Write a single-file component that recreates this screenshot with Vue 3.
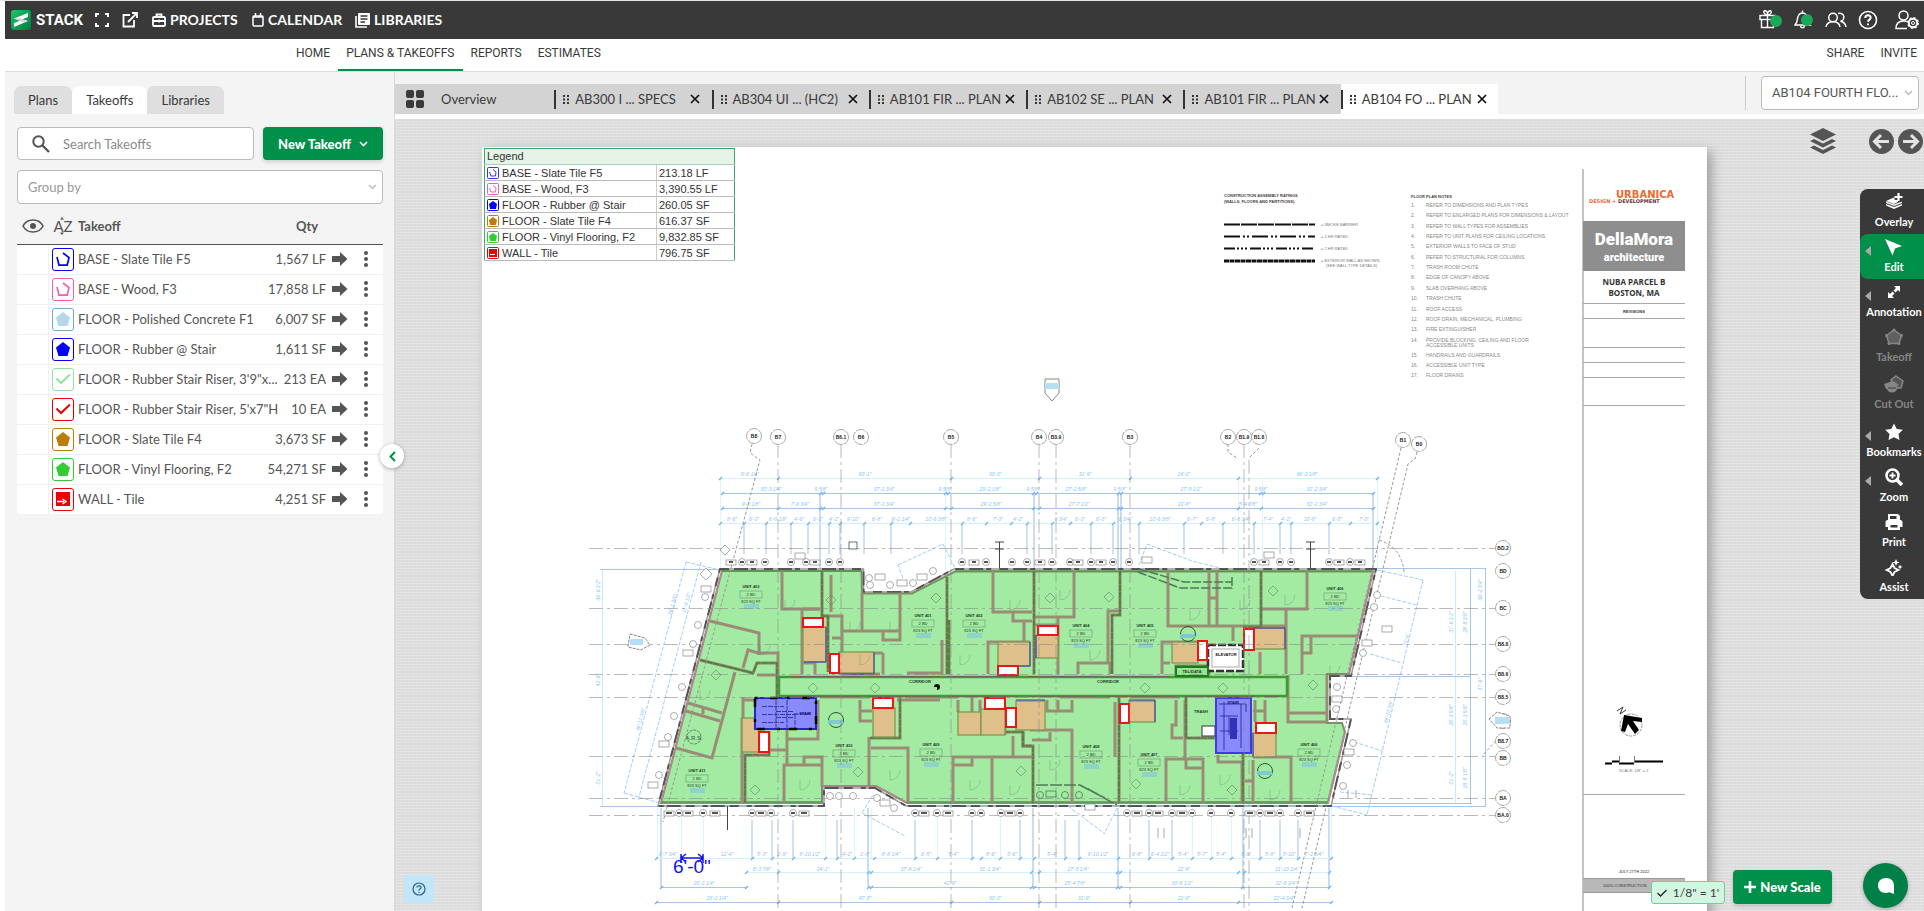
<script setup>
import { ref } from 'vue'

const search = ref('')
const takeoffs = [
  { name: 'BASE - Slate Tile F5', qty: '1,567 LF', kind: 'line', color: '#0000fa' },
  { name: 'BASE - Wood, F3', qty: '17,858 LF', kind: 'line', color: '#ee5fb0' },
  { name: 'FLOOR - Polished Concrete F1', qty: '6,007 SF', kind: 'area', color: '#b4d7ee', edge: '#66aedd' },
  { name: 'FLOOR - Rubber @ Stair', qty: '1,611 SF', kind: 'area', color: '#0000fa' },
  { name: 'FLOOR - Rubber Stair Riser, 3\'9"x...', qty: '213 EA', kind: 'check', color: '#8fe6a0' },
  { name: 'FLOOR - Rubber Stair Riser, 5\'x7"H', qty: '10 EA', kind: 'check', color: '#ea0000' },
  { name: 'FLOOR - Slate Tile F4', qty: '3,673 SF', kind: 'area', color: '#bd7d0c' },
  { name: 'FLOOR - Vinyl Flooring, F2', qty: '54,271 SF', kind: 'area', color: '#33cc33' },
  { name: 'WALL - Tile', qty: '4,251 SF', kind: 'wall', color: '#ea0000' },
]
const legend = [
  { name: 'BASE - Slate Tile F5', qty: '213.18 LF', kind: 'line', color: '#3030ff' },
  { name: 'BASE - Wood, F3', qty: '3,390.55 LF', kind: 'line', color: '#ee5fb0' },
  { name: 'FLOOR - Rubber @ Stair', qty: '260.05 SF', kind: 'area', color: '#0000fa' },
  { name: 'FLOOR - Slate Tile F4', qty: '616.37 SF', kind: 'area', color: '#bd7d0c' },
  { name: 'FLOOR - Vinyl Flooring, F2', qty: '9,832.85 SF', kind: 'area', color: '#33cc33' },
  { name: 'WALL - Tile', qty: '796.75 SF', kind: 'wall', color: '#ea0000' },
]
const sheets = ['AB300 I ... SPECS', 'AB304 UI ... (HC2)', 'AB101 FIR ... PLAN', 'AB102 SE ... PLAN', 'AB101 FIR ... PLAN', 'AB104 FO ... PLAN']
const tools = [
  { name: 'Overlay', icon: 'overlay' },
  { name: 'Edit', icon: 'edit', menu: true, active: true },
  { name: 'Annotation', icon: 'annotation', menu: true },
  { name: 'Takeoff', icon: 'takeoff', off: true },
  { name: 'Cut Out', icon: 'cutout', off: true },
  { name: 'Bookmarks', icon: 'star', menu: true },
  { name: 'Zoom', icon: 'zoom', menu: true },
  { name: 'Print', icon: 'print' },
  { name: 'Assist', icon: 'assist' },
]

/* Plan sheet geometry, in sheet units */
const outline = 'M722 571H861.5L862 593.5H912L955 571.5H1373L1349 674H1327V723H1342L1345 732L1328 803H907L876 786H822V803H661Z'
const shell = 'M720 569H863.5V592H911L954 569H1376L1351 676H1330V719H1351L1331 806H906L875 788H824V806H658Z'
const walls = [
  'M782 571V609H820', 'M862 593V631M842 631H900', 'M900 593V640H883V631', 'M823 616H842V674M832 638H842',
  'M993 571V612H1032', 'M1013 612V621H1032M1024 621V641', 'M988 674V642H1030', 'M710 621L759 633V655', 'M802 610V674', 'M802 609H820',
  'M1074 571V617H1035M1035 625H1058M1058 617V674', 'M1108 662V611H1120', 'M1168 571V626H1286', 'M1209 571V626M1217 571V626M1209 598H1217',
  'M1307 571V609H1262', 'M1286 609V674', 'M1357 636H1302V674M1311 636V653H1302', 'M1233 626V641', 'M1162 674V642H1208M1162 663H1170',
  'M688 703L722 713M686 711L720 721M703 708V714', 'M735 672L712 758L676 748', 'M743 668L748 650L758 653H778V675H757',
  'M743 697V718', 'M742 718V803', 'M769 750H787M787 730V765M788 739H818V700', 'M822 765V786M822 765H784V803M804 765V757H822V765',
  'M860 700V721H872M860 711H872', 'M869 786V737M871 748H908V803', 'M953 803V757H1032M953 765H972V757M992 757V803',
  'M958 700V712M1013 736V757M1023 732V746H1032M980 700V712', 'M803 663H815V674', 'M883 653V674M875 653H883M942 640V673H907',
  'M1078 674V663H1110V674', 'M1030 730H1072V803M1032 740H1050V732', 'M1047 700V711H1072V700M1058 700V711',
  'M1115 702V757', 'M1176 700V725H1172V738H1183', 'M1185 700V759', 'M1166 803V759H1203V803M1186 759V768H1203',
  'M1218 755V762H1242V803', 'M1253 760V803M1245 781H1253M1253 757H1291V803', 'M1253 711H1265M1265 700V722M1255 700V722',
  'M1288 675V722H1327M1288 713H1327M1327 675V722', 'M1260 652V674', 'M831 575V612', 'M842 674H880M820 697H870M905 697H958M1060 697H1110M1130 697H1180',
  'M972 697V712M1005 712V735', 'M897 700H940', 'M742 700H755',
]
const partyWalls = [
  'M822 571V616H828V672', 'M947 577V674M949 620V674', 'M1034 571V674', 'M1120 571V615H1112V674', 'M1261 571V627H1243',
  'M700 660L753 673L757 663H777V697', 'M745 803V755H769V731', 'M870 738H900V697', 'M1005 732H1023V746H1033V803', 'M1119 697V803',
  'M1186 697V738H1215', 'M1243 753V803', 'M1176 666V674H1209V666Z',
]
const baths = [
  [803, 627, 23, 35], [839, 652, 35, 21], [998, 642, 32, 24], [1036, 635, 22, 23], [1172, 642, 26, 21], [1253, 628, 32, 21],
  [742, 718, 18, 34], [873, 708, 22, 29], [958, 712, 23, 23], [981, 709, 24, 26], [1016, 701, 29, 29], [1129, 701, 26, 21], [1253, 733, 23, 24],
]
const tubs = [
  [803, 618, 20, 9], [830, 654, 9, 19], [998, 666, 20, 9], [1038, 626, 20, 9], [1198, 641, 9, 19], [1244, 629, 10, 21],
  [759, 732, 10, 20], [873, 698, 20, 10], [985, 698, 20, 11], [1006, 708, 10, 19], [1120, 704, 9, 19], [1256, 723, 20, 10],
]
const units = [
  ['UNIT 403', 751, 588], ['UNIT 401', 923, 617], ['UNIT 402', 974, 617], ['UNIT 404', 1081, 627], ['UNIT 405', 1145, 627], ['UNIT 406', 1335, 590],
  ['UNIT 411', 697, 772], ['UNIT 410', 844, 747], ['UNIT 409', 931, 746], ['UNIT 408', 1091, 748], ['UNIT 407', 1149, 756], ['UNIT 406', 1309, 746],
]
const topBubbles = [
  ['B8', 754, 436], ['B7', 778, 437], ['B6.1', 841, 437], ['B6', 861, 437], ['B5', 951, 437], ['B4', 1039, 437], ['B3.9', 1056, 437],
  ['B3', 1130, 437], ['B2', 1228, 437], ['B1.9', 1244, 437], ['B1.8', 1259, 437], ['B1', 1403, 440], ['B0', 1419, 444],
]
const sideBubbles = [
  ['BD.2', 548], ['BD', 571], ['BC', 608], ['B8.8', 644], ['B8.6', 674], ['B8.5', 697], ['B8.4', 721], ['B8.7', 741], ['BB', 758], ['BA', 798], ['BA.0', 815],
]
const colLines = [778, 841, 951, 1039, 1056, 1130, 1244, 1249]
const rowLines = [548, 608, 644, 674, 697, 756, 798, 815]
const dims = [
  { y: 478, from: 720, to: 1377, light: true, at: [720, 778, 951, 1039, 1130, 1238, 1377] },
  { y: 493, from: 722, to: 1373, at: [722, 820, 823, 945, 948, 1033, 1036, 1118, 1121, 1260, 1263, 1373] },
  { y: 508, from: 722, to: 1373, at: [722, 778, 820, 823, 945, 951, 1033, 1039, 1118, 1121, 1238, 1261, 1373] },
  { y: 523, from: 720, to: 1377, light: true, at: [720, 744, 766, 791, 808, 829, 840, 864, 891, 910, 962, 986, 1011, 1027, 1052, 1070, 1091, 1113, 1139, 1184, 1201, 1223, 1254, 1280, 1291, 1329, 1350, 1377] },
  { y: 858, from: 656, to: 1331, light: true, at: [656, 752, 772, 793, 825, 837, 854, 874, 915, 937, 972, 981, 1000, 1020, 1034, 1065, 1079, 1118, 1149, 1172, 1192, 1211, 1231, 1260, 1280, 1298, 1331] },
  { y: 872, from: 746, to: 1329, light: true, at: [746, 778, 868, 871, 1031, 1039, 1117, 1120, 1238, 1244, 1329] },
  { y: 887, from: 661, to: 1329, gap: true, at: [661, 746, 868, 871, 1031, 1034, 1117, 1120, 1242, 1329] },
  { y: 902, from: 656, to: 1331, at: [656, 778, 951, 1039, 1130, 1238, 1331] },
]
const dimLabels = [
  [750, 476, '9\'-8 1/4"'], [865, 476, '60\'-1"'], [995, 476, '30\'-3"'], [1085, 476, '31\'-9"'], [1184, 476, '24\'-0"'], [1307, 476, '46\'-2 1/8"'],
  [771, 491, '30\'-3 1/4"'], [821, 491, '9 5/8"'], [884, 491, '37\'-1 3/4"'], [945, 491, '9 5/8"'], [990, 491, '29\'-2 1/8"'], [1033, 491, '9 5/8"'], [1076, 491, '27\'-2 5/8"'], [1120, 491, '9 5/8"'], [1191, 491, '27\'-5 1/2"'], [1261, 491, '9 5/8"'], [1317, 491, '32\'-2 3/4"'],
  [751, 506, '9\'-2 1/8"'], [800, 506, '7\'-6 3/4"'], [884, 506, '37\'-1 3/4"'], [991, 506, '29\'-2 5/8"'], [1079, 506, '27\'-7 1/2"'], [1184, 506, '22\'-8"'], [1248, 506, '5\'-4 7/8"'], [1317, 506, '32\'-2 3/4"'],
  [732, 521, '8\'-6"'], [754, 521, '6\'-3"'], [778, 521, '6\'-8 1/8"'], [799, 521, '4\'-6"'], [818, 521, '6\'-2"'], [834, 521, '4\'-2"'], [853, 521, '9\'-10"'], [877, 521, '6\'-8"'], [901, 521, '6\'-2 1/4"'], [936, 521, '10\'-6 3/8"'], [972, 521, '8\'-6"'], [998, 521, '7\'-3"'], [1018, 521, '4\'-2"'], [1061, 521, '8 3/4"'], [1080, 521, '6\'-3"'], [1101, 521, '6\'-3"'], [1125, 521, '6 3/4"'], [1160, 521, '10\'-6 3/8"'], [1192, 521, '6\'-7"'], [1211, 521, '6\'-8"'], [1241, 521, '6\'-8 3/4"'], [1268, 521, '7\'-4"'], [1286, 521, '4\'-2"'], [1310, 521, '10\'-8"'], [1337, 521, '6\'-5"'], [1364, 521, '7\'-3"'],
  [668, 856, '6\'-7 3/4"'], [727, 856, '12\'-4"'], [762, 856, '5\'-3"'], [782, 856, '2\'-9"'], [810, 856, '8\'-10 1/2"'], [847, 856, '4\'-2"'], [865, 856, '1\'-8"'], [891, 856, '8\'-8 1/4"'], [926, 856, '6\'-5"'], [953, 856, '5\'-4"'], [991, 856, '8\'-6"'], [1012, 856, '3\'-6"'], [1052, 856, '5\'-4"'], [1098, 856, '9\'-10 1/2"'], [1137, 856, '6\'-8"'], [1160, 856, '6\'-4 1/2"'], [1183, 856, '5\'-4"'], [1202, 856, '5\'-7"'], [1221, 856, '5\'-4"'], [1246, 856, '8\'-8"'], [1270, 856, '5\'-8"'], [1289, 856, '5\'-10"'], [1314, 856, '7\'-2 3/4"'],
  [762, 871, '8\'-3 7/8"'], [823, 871, '24\'-1"'], [911, 871, '37\'-8 1/4"'], [990, 871, '31\'-1 3/4"'], [1078, 871, '27\'-5 1/4"'], [1184, 871, '22\'-8"'], [1287, 871, '21\'-10 1/4"'],
  [704, 885, '20\'-2 1/4"'], [950, 885, '42\'-9"'], [1075, 885, '25\'-4 7/8"'], [1182, 885, '30\'-6 1/2"'], [1286, 885, '32\'-8 3/4"'],
  [717, 900, '26\'-2 1/4"'], [865, 900, '47\'-5"'], [995, 900, '30\'-3"'], [1084, 900, '31\'-9"'], [1184, 900, '22\'-8"'], [1284, 900, '22\'-4 3/4"'],
]
const topDrops = [744, 766, 791, 808, 829, 840, 864, 891, 962, 1027, 1052, 1091, 1113, 1139, 1184, 1223, 1254, 1280, 1291, 1329]
const bottomDrops = [752, 772, 793, 837, 915, 972, 1020, 1065, 1079, 1149, 1172, 1260, 1280, 1298]
const topTags = [742, 765, 791, 806, 829, 840, 962, 986, 1012, 1027, 1052, 1070, 1091, 1113, 1129, 1254, 1280, 1291, 1329, 1350]
const topBoxes = [731, 752, 815, 974, 1040, 1078, 1101, 1264, 1339, 1360]
const bottomTags = [679, 703, 752, 771, 793, 915, 937, 972, 981, 1001, 1020, 1127, 1149, 1172, 1192, 1211, 1231, 1260, 1280, 1298]
const bottomBoxes = [669, 688, 715, 761, 804, 924, 948, 1010, 1137, 1158, 1182, 1250, 1270, 1309]
const notes = [
  [206, 'REFER TO DIMENSIONS AND PLAN TYPES'],
  [216, 'REFER TO ENLARGED PLANS FOR DIMENSIONS & LAYOUT'],
  [227, 'REFER TO WALL TYPES FOR ASSEMBLIES'],
  [237, 'REFER TO UNIT PLANS FOR CEILING LOCATIONS'],
  [247, 'EXTERIOR WALLS TO FACE OF STUD'],
  [258, 'REFER TO STRUCTURAL FOR COLUMNS'],
  [268, 'TRASH ROOM CHUTE'],
  [278, 'EDGE OF CANOPY ABOVE'],
  [289, 'SLAB OVERHANG ABOVE'],
  [299, 'TRASH CHUTE'],
  [310, 'ROOF ACCESS'],
  [320, 'ROOF DRAIN, MECHANICAL, PLUMBING'],
  [330, 'FIRE EXTINGUISHER'],
  [341, 'PROVIDE BLOCKING, CEILING AND FLOOR'],
  [356, 'HANDRAILS AND GUARDRAILS'],
  [366, 'ACCESSIBLE UNIT TYPE'],
  [376, 'FLOOR DRAINS'],
]
</script>

<template>
  <div class="app">
    <header class="topbar">
      <a class="brand" href="#" aria-label="STACK">
        <svg width="20" height="20" viewBox="0 0 20 20"><defs><linearGradient id="lg" x1="0" y1="0" x2="1" y2="1"><stop offset="0" stop-color="#1ec468" /><stop offset="1" stop-color="#067a42" /></linearGradient></defs><rect width="20" height="20" rx="3" fill="url(#lg)" /><path d="M3 8.500L17 3V7L8 10.500Z" fill="#fff" /><path d="M17 11L3 17V13L12 9.500Z" fill="#fff" /><path d="M3 8.500L8 8L17 11L12 12Z" fill="#c9d6ce" /></svg>
        <span>STACK</span>
      </a>
      <button class="ib expand" aria-label="Full screen"><svg width="14" height="14" viewBox="0 0 14 14" fill="none" stroke="#fff" stroke-width="2"><path d="M1 4V1H4M10 1H13V4M13 10V13H10M4 13H1V10" /></svg></button>
      <button class="ib popout" aria-label="Open in new window"><svg width="16" height="16" viewBox="0 0 16 16" fill="none" stroke="#fff" stroke-width="1.800"><path d="M8 3H1.500V14.500H12V8M6 10L14.500 1.500M10 1H15V6" /></svg></button>
      <a class="menu projects" href="#"><svg width="14" height="14" viewBox="0 0 14 14" fill="none" stroke="#fff" stroke-width="1.800"><rect x="1" y="4" width="12" height="9" rx="1" /><path d="M4.500 4V1.500H9.500V4M1 8H13" /><path d="M7 6.500V9.500" /></svg>PROJECTS</a>
      <a class="menu calendar" href="#"><svg width="12" height="14" viewBox="0 0 12 14" fill="none" stroke="#fff" stroke-width="1.500"><rect x="1" y="3" width="10" height="10" rx="1" /><path d="M1 4H11M3.500 0V4M8.500 0V4" /></svg>CALENDAR</a>
      <a class="menu libraries" href="#"><svg width="15" height="15" viewBox="0 0 15 15"><path d="M1 3V14H12" fill="none" stroke="#fff" stroke-width="1.600" /><rect x="3" y="0" width="12" height="12" rx="1" fill="#fff" /><path d="M5.500 3H12.500M5.500 6H12.500M5.500 9H10" stroke="#393939" stroke-width="1.400" /></svg>LIBRARIES</a>
      <div class="actions">
        <button class="ib" aria-label="What's new"><svg width="24" height="20" viewBox="0 0 24 20" fill="none" stroke="#fff" stroke-width="1.400"><rect x="1" y="5.500" width="15" height="4" /><path d="M2.500 9.500V17.500H14.500V9.500M8.500 5.500V17.500M8.500 5C5 5 3.500 1 6 .8C8 .8 8.500 3 8.500 5C8.500 3 9 .8 11 .8C13.500 1 12 5 8.500 5" /><circle cx="17" cy="11" r="6" fill="#1ba85a" stroke="none" /></svg></button>
        <button class="ib" aria-label="Notifications"><svg width="20" height="20" viewBox="0 0 20 20" fill="none" stroke="#fff" stroke-width="1.400"><path d="M1 15C4 12 3 9 4 6.500C5 4 6.500 3 8.500 3C10.500 3 12 4 13 6.500C14 9 13 12 16 15ZM8.500 .5V3M6.500 16C7 18.500 10 18.500 10.500 16" /><circle cx="13" cy="10" r="6" fill="#1ba85a" stroke="none" /></svg></button>
        <button class="ib" aria-label="Team"><svg width="22" height="16" viewBox="0 0 22 16" fill="none" stroke="#fff" stroke-width="1.500"><circle cx="8" cy="5.500" r="4.300" /><path d="M1 15C1.500 11.500 4 9.700 8 9.700C12 9.700 14.500 11.500 15 15M13 1.500C20 0 20.500 8 15.500 9.300C19 10 20.500 12 21 15" /></svg></button>
        <button class="ib" aria-label="Help"><svg width="20" height="20" viewBox="0 0 20 20" fill="none" stroke="#fff" stroke-width="1.600"><circle cx="10" cy="10" r="8.500" /><path d="M7.300 8C7.300 4.400 12.700 4.500 12.700 7.700C12.700 9.500 10 9.800 10 11.800M10 13.400V15.200" stroke-width="2" /></svg></button>
        <button class="ib account" aria-label="Account settings"><svg width="24" height="20" viewBox="0 0 24 20" fill="none" stroke="#fff" stroke-width="1.500"><circle cx="8.500" cy="5.500" r="4.500" /><path d="M12 18.500H1C1 13.500 3.500 11 8.500 11C10 11 11 11.200 12 11.700" /><circle cx="18" cy="13" r="4.200" stroke-width="2" /><circle cx="18" cy="13" r="5.200" stroke-dasharray="2 2.080" stroke-width="1.500" /><circle cx="18" cy="13" r="1.500" stroke-width="1" /></svg></button>
      </div>
    </header>

    <nav class="subnav">
      <a href="#">HOME</a><a class="on" href="#">PLANS &amp; TAKEOFFS</a><a href="#">REPORTS</a><a href="#">ESTIMATES</a>
      <span class="grow"></span>
      <a href="#">SHARE</a><a href="#">INVITE</a>
    </nav>

    <div class="body">
      <aside class="side">
        <div class="sidetabs"><button>Plans</button><button class="on">Takeoffs</button><button>Libraries</button></div>
        <div class="tools">
          <label class="search"><svg width="18" height="18" viewBox="0 0 18 18" fill="none" stroke="#555" stroke-width="2"><circle cx="6.500" cy="6.500" r="5.200" /><path d="M10.500 10.500L17 17" stroke-width="2.400" /></svg><input v-model="search" type="text" placeholder="Search Takeoffs" aria-label="Search Takeoffs"></label>
          <button class="primary">New Takeoff<svg width="9" height="6" viewBox="0 0 9 6" fill="none" stroke="#fff" stroke-width="1.600"><path d="M1 1L4.500 4.500L8 1" /></svg></button>
        </div>
        <div class="selectwrap group"><select aria-label="Group by"><option>Group by</option></select><svg width="9" height="6" viewBox="0 0 9 6" fill="none" stroke="#bbb" stroke-width="1.500"><path d="M1 1L4.500 4.500L8 1" /></svg></div>
        <table class="takeoffs">
          <colgroup><col class="c-eye"><col class="c-icon"><col><col class="c-qty"><col class="c-go"><col class="c-more"></colgroup>
          <thead><tr>
            <th><svg width="22" height="14" viewBox="0 0 22 14" fill="none" stroke="#555" stroke-width="1.600"><path d="M1 7C5 -1 17 -1 21 7C17 15 5 15 1 7Z" /><circle cx="11" cy="7" r="3" fill="#555" stroke="none" /></svg></th>
            <th class="az"><span>AZ</span><svg width="6" height="18" viewBox="0 0 6 18" fill="#555"><path d="M1 2.500L3 0L5 2.500ZM1 15.500L3 18L5 15.500Z" /></svg></th>
            <th class="l">Takeoff</th><th class="q" colspan="3">Qty</th>
          </tr></thead>
          <tbody>
            <tr v-for="t in takeoffs" :key="t.name">
              <td></td>
              <td class="ic"><svg width="22" height="23" viewBox="0 0 22 23">
                <rect x=".5" y=".5" width="21" height="22" rx="2.500" fill="#fff" :stroke="t.edge || t.color" />
                <path v-if="t.kind === 'area'" d="M11 4L18 9.500L15.500 18H6.500L4 9.500Z" :fill="t.color" />
                <path v-else-if="t.kind === 'line'" d="M11 5L17 9.500L15.200 17.200H7L5 9" fill="none" :stroke="t.color" stroke-width="1.700" />
                <path v-else-if="t.kind === 'check'" d="M4.500 10.500L9 15L18 6.500" fill="none" :stroke="t.color" stroke-width="2" />
                <g v-else><rect x="4" y="4" width="14" height="14" :fill="t.color" /><path d="M5 13.500H12M10.500 11L14 13.500L10.500 16" fill="none" stroke="#fff" stroke-width="1.500" /></g>
              </svg></td>
              <td class="name">{{ t.name }}</td>
              <td class="qty">{{ t.qty }}</td>
              <td><button class="ib" aria-label="Go to takeoff"><svg width="16" height="14" viewBox="0 0 16 14" fill="#555"><path d="M0 4H8V0L15.500 7L8 14V10H0Z" /></svg></button></td>
              <td><button class="ib" aria-label="More options"><svg width="4" height="16" viewBox="0 0 4 16" fill="#555"><circle cx="2" cy="2" r="2" /><circle cx="2" cy="8" r="2" /><circle cx="2" cy="14" r="2" /></svg></button></td>
            </tr>
          </tbody>
        </table>
        <button class="collapse" aria-label="Collapse panel"><svg width="7" height="11" viewBox="0 0 7 11" fill="none" stroke="#00904a" stroke-width="2"><path d="M6 1L1.500 5.500L6 10" /></svg></button>
      </aside>

      <main class="main">
        <div class="strip">
          <div class="sheets">
            <button class="sheet first"><svg width="18" height="18" viewBox="0 0 18 18" fill="#3a3a3a"><rect width="8" height="8" rx="2" /><rect x="10" width="8" height="8" rx="2" /><rect y="10" width="8" height="8" rx="2" /><rect x="10" y="10" width="8" height="8" rx="2" /></svg>Overview</button>
            <div v-for="(s, i) in sheets" :key="i" class="sheet" :class="{ on: i === 5 }">
              <svg width="6" height="9" viewBox="0 0 6 9" fill="#333"><rect width="2" height="2" /><rect x="4" width="2" height="2" /><rect y="3.500" width="2" height="2" /><rect x="4" y="3.500" width="2" height="2" /><rect y="7" width="2" height="2" /><rect x="4" y="7" width="2" height="2" /></svg>
              <a href="#">{{ s }}</a>
              <button class="ib" aria-label="Close sheet"><svg width="10" height="10" viewBox="0 0 10 10" stroke="#111" stroke-width="1.700"><path d="M1 1L9 9M9 1L1 9" /></svg></button>
            </div>
          </div>
          <div class="pick">
            <div class="selectwrap"><select aria-label="Current sheet"><option>AB104 FOURTH FLO...</option></select><svg width="9" height="6" viewBox="0 0 9 6" fill="none" stroke="#bbb" stroke-width="1.500"><path d="M1 1L4.500 4.500L8 1" /></svg></div>
          </div>
        </div>

        <div class="canvas">
          <svg class="plan" viewBox="395 119 1529 792" preserveAspectRatio="xMinYMin slice">
            <rect class="paper" x="482" y="147" width="1225" height="800" fill="#fff" />
            <!-- line type key -->
            <g class="tiny" font-weight="bold" fill="#444"><text x="1224" y="197">CONSTRUCTION ASSEMBLY RATINGS</text><text x="1224" y="203">(WALLS, FLOORS AND PARTITIONS)</text></g>
            <g stroke="#111" stroke-width="2" fill="none"><path d="M1224 224.500H1315" stroke-dasharray="16 1" /><path d="M1224 236.500H1315" stroke-dasharray="16 3 2 2 2 3" /><path d="M1224 248.500H1315" stroke-dasharray="11 2 2 2 2 2 2 3" /><path d="M1224 261H1315" stroke-width="3" stroke-dasharray="5 .5" /></g>
            <g class="tiny" fill="#777"><text x="1321" y="226">= SMOKE BARRIER</text><text x="1321" y="238">= 1 HR RATED</text><text x="1321" y="250">= 2 HR RATED</text><text x="1321" y="262">= EXTERIOR WALL AS SHOWN</text><text x="1326" y="267">(SEE WALL TYPE DETAILS)</text></g>
            <text class="tiny" x="1411" y="198" font-weight="bold" fill="#444">FLOOR PLAN NOTES</text>
            <g class="note" fill="#888"><template v-for="(n, i) in notes" :key="i"><text x="1411" :y="n[0] + 1">{{ i + 1 }}.</text><text x="1426" :y="n[0] + 1">{{ n[1] }}</text></template><text x="1426" y="347">ACCESSIBLE UNITS</text></g>
            <!-- title block -->
            <g stroke="#aaa" fill="none"><path d="M1583 169V911" stroke="#c4c4c4" stroke-width="2" /><path d="M1583 303.500H1685M1583 318.500H1685M1583 347.500H1685M1583 362.500H1685M1583 377.500H1685M1583 405.500H1685M1583 794.500H1685" /></g>
            <text class="urb" x="1616" y="198" fill="#ee6a2c">URBANICA</text>
            <text class="des" x="1589" y="203"><tspan fill="#e06a3c">DESIGN + </tspan><tspan fill="#6b3040">DEVELOPMENT</tspan></text>
            <rect x="1583" y="221" width="102" height="50" fill="#8e8e8e" />
            <text class="della" x="1634" y="245" font-size="17" fill="#fff">DellaMora</text><text class="della" x="1634" y="261" font-size="11" fill="#fff">architecture</text>
            <g class="nuba"><text x="1634" y="285">NUBA PARCEL B</text><text x="1634" y="296">BOSTON, MA</text></g>
            <text class="tiny mid" x="1634" y="313" font-weight="bold" fill="#333">REVISIONS</text>
            <circle cx="1631" cy="725" r="11" fill="none" stroke="#999" stroke-dasharray="3 1" /><path d="M1624 715L1642 718V722L1633 721L1639 730L1635 734L1628 724L1625 732L1621 731Z" fill="#000" /><path d="M1617 711L1623 707L1620 714L1626 710" stroke="#333" fill="none" />
            <path d="M1605 763.500H1612M1612 761.500H1619M1619 763.500H1634M1634 761.500H1663" stroke="#000" stroke-width="2" /><path d="M1619.500 756V763M1634.500 756V763" stroke="#777" /><text class="tiny mid" x="1634" y="772" fill="#777">SCALE: 1/8" = 1'</text>
            <text class="tiny mid" x="1634" y="873" fill="#222">JULY 27TH 2022</text><rect x="1583" y="878" width="102" height="14" fill="#b8b8b8" /><path d="M1583 878.500H1685M1583 892.500H1685" stroke="#999" /><text class="tiny" x="1603" y="887" fill="#333">100% CONSTRUCTION</text>

            <!-- dimension strings -->
            <g fill="none">
              <path v-for="x in [720, 945, 1238, 1262, 1377]" :key="'l' + x" :d="`M${x}.5 478V569`" stroke="#dcf5fd" />
              <path v-for="x in [820, 1034, 1118, 1121, 1373]" :key="'m' + x" :d="`M${x} 493V569`" stroke="#b7d1ee" stroke-width="1.500" />
              <path v-for="x in topDrops" :key="'t' + x" :d="`M${x} 523V554`" stroke="#b7d1ee" stroke-width="1.300" />
              <path v-for="x in bottomDrops" :key="'b' + x" :d="`M${x} 820V858`" stroke="#b7d1ee" stroke-width="1.300" />
              <path v-for="x in [661, 868, 1033, 1118, 1243, 1329]" :key="'n' + x" :d="`M${x} 808V887`" stroke="#b7d1ee" stroke-width="1.500" />
              <path v-for="x in [657, 681, 703, 825, 854, 871, 937, 1000, 1192, 1211, 1231, 1331]" :key="'o' + x" :d="`M${x}.5 808V858`" stroke="#def4fd" />
              <path v-for="d in dims" :key="d.y" :d="d.gap ? `M661 ${d.y}.5H746M868 ${d.y}.5H1329` : `M${d.from} ${d.y}.5H${d.to}`" :stroke="d.light ? '#d2f0fc' : '#a5c5e9'" />
              <template v-for="d in dims" :key="'k' + d.y"><path v-for="x in d.at" :key="x" :d="`M${x - 1} ${d.y + 2}l3 -3`" stroke="#6fb6f2" stroke-width="1.500" /></template>
              <g stroke="#a5c5e9"><path d="M602.500 569V806" stroke="#c4ecfb" /><path d="M600 569.500H720M600 806.500H660" /><path d="M1455.500 571V803" stroke="#c4ecfb" /><path d="M1470.500 569V803M1485.500 569V807M1378 568.500H1486M1332 803.500H1472M1332 806.500H1486M1350 676.500H1470" /></g>
              <g stroke="#a3cef5" stroke-dasharray="4 1.500"><path d="M686 562L624 793M701 562L638 801M686 562L720 570M624 793L660 803M1423 580L1367 815M1377 570L1423 580M1332 806L1367 815M1381 596L1417 605M1370 654L1402 663M1354 742L1382 751M1340 792L1372 795M898 565L943 544M903 578L898 565M943 544L955 568M1147 544L1192 561L1220 568M1139 565L1147 544M862 813L905 836M873 795L862 813M1068 806L1105 834M1117 808L1104 834" /></g>
            </g>
            <g class="dim"><text v-for="(d, i) in dimLabels" :key="i" :x="d[0]" :y="d[1]">{{ d[2] }}</text></g>
            <g class="dim">
              <text transform="translate(600 590) rotate(-90)">36'-6 1/2"</text><text transform="translate(600 680) rotate(-90)">42'-8"</text><text transform="translate(600 778) rotate(-90)">21'-2"</text>
              <text transform="translate(674 605) rotate(-75)">26'-1 3/4"</text><text transform="translate(642 720) rotate(-75)">46'-11 3/8"</text><text transform="translate(688 603) rotate(-75)">11'-8 1/2"</text>
              <text transform="translate(1453 622) rotate(-90)">37'-6 1/2"</text><text transform="translate(1467 622) rotate(-90)">28'-8 3/8"</text><text transform="translate(1482 590) rotate(-90)">36'-2 3/4"</text><text transform="translate(1453 715) rotate(-90)">20'-3 5/8"</text><text transform="translate(1467 715) rotate(-90)">20'-3 5/8"</text><text transform="translate(1482 684) rotate(-90)">37'-6"</text><text transform="translate(1453 778) rotate(-90)">21'-2"</text><text transform="translate(1467 778) rotate(-90)">18'-8 1/8"</text>
              <text transform="translate(1390 712) rotate(-76)">46'-10 3/4"</text><text transform="translate(1408 640) rotate(-76)">15'-6"</text>
            </g>

            <!-- building -->
            <path :d="shell" fill="#fff" stroke="#999" stroke-width="1.500" /><path :d="shell" fill="none" stroke="#555" stroke-width="2" stroke-dasharray="9 5 14 3 5 8" />
            <path :d="outline" fill="#a3eaa3" stroke="#7d8f66" stroke-width="2" />
            <path d="M722 571L661 803H822M1373 571L1349 674M1345 732L1328 803H907L876 786H822" fill="none" stroke="#d879a8" />
            <path d="M722 571H861M955 571H1373M661 802H822M907 802H1328" fill="none" stroke="#4f9d45" stroke-width="1.500" />
            <g fill="none" stroke="#9b8d75" stroke-width="3"><path v-for="(w, i) in walls" :key="i" :d="w" /></g>
            <g fill="none" stroke="#8b8467" stroke-width="3"><path v-for="(w, i) in partyWalls" :key="i" :d="w" /></g>
            <g fill="none" stroke="#3f7a32" stroke-width="1.200" stroke-dasharray="6 1"><path v-for="(w, i) in partyWalls" :key="i" :d="w" /></g>
            <rect x="779" y="677" width="508" height="19" fill="#a3eaa3" stroke="#3f9a36" stroke-width="2.500" /><path d="M790 676.500H1170M790 696.500H1280" stroke="#6f6a4c" stroke-dasharray="70 9" />
            <rect x="1208" y="645" width="35" height="26" fill="#fff" stroke="#333" stroke-width="2.500" stroke-dasharray="8 2" /><rect x="1212" y="649" width="27" height="18" fill="none" stroke="#aaa" />
            <rect x="1202" y="726" width="13" height="10" fill="#fff" stroke="#333" />
            <rect x="1176" y="667" width="32" height="9" fill="#92e592" stroke="#1f7a1a" stroke-width="2" />
            <g fill="#dfc08a" stroke="#7d9a50" stroke-width="1.300"><rect v-for="(b, i) in baths" :key="i" :x="b[0]" :y="b[1]" :width="b[2]" :height="b[3]" /></g>
            <g fill="none" stroke="#3b35b8"><path d="M826 627V662H804M839 674H874V652M1030 642V666H1018M1036 635V658M1253 628H1285V649M1016 700H1045M1129 700H1155V722M1253 757V733" /></g>
            <g fill="#fff" stroke="#ee1515" stroke-width="2"><rect v-for="(b, i) in tubs" :key="i" :x="b[0]" :y="b[1]" :width="b[2]" :height="b[3]" /></g>
            <g fill="#8a8aff" stroke="#2323c8" stroke-width="2"><rect x="755" y="698" width="61" height="31" /><rect x="1216" y="698" width="35" height="55" stroke="#3b3be8" /></g>
            <path d="M755 698H816V729H755Z" fill="none" stroke="#000" stroke-width="2.500" stroke-dasharray="3 12 8 9" />
            <g stroke="#3535a5" fill="none"><path d="M762 706.500H784M762 714.500H797M762 722.500H784M776 711.500H794M776 717.500H794M776 700V728M787 700V728M794 714H812M795 714V728" stroke-dasharray="5 1" /><path d="M1220 716H1238M1220 731H1238M1224 702V750M1229 716V735M1241 704V748M1219 704H1246V712" /></g>
            <rect x="1230" y="718" width="7" height="21" fill="#3232b8" />
            <path d="M1138 572L1180 588H1232V575M1139 569L1184 582H1232" stroke="#4d7a54" stroke-width="1.500" fill="none" stroke-dasharray="9 2" />
            <path d="M1036 785H1080L1117 805M1088 789L1105 798" stroke="#4d7a54" stroke-width="1.500" fill="none" stroke-dasharray="12 2" />
            <g fill="none" stroke="#5b8460" stroke-width=".6">
              <circle v-for="x in [836, 1188, 1265]" :key="x" :cx="x" :cy="x === 836 ? 720 : x === 1188 ? 634 : 771" r="7.500" stroke="#2b5a35" stroke-width="1" />
              <path v-for="(p, i) in [[813, 688], [875, 688], [1145, 688], [1223, 688], [831, 600], [936, 598], [1109, 597], [1273, 591], [1050, 598], [755, 790], [858, 772], [1021, 771], [1136, 784], [1232, 790], [1313, 685], [716, 675]]" :key="i" :d="`M${p[0] - 5} ${p[1]}l5 -5l5 5l-5 5Z`" />
              <path v-for="(p, i) in [[785, 600], [850, 622], [890, 622], [1010, 600], [1060, 590], [1190, 610], [1240, 600], [1285, 595], [800, 780], [890, 770], [970, 780], [1010, 785], [1050, 760], [1180, 785], [1220, 775], [1270, 790], [1330, 665], [700, 690], [760, 645], [860, 655], [960, 655], [1090, 650]]" :key="'d' + i" :d="`M${p[0]} ${p[1]}v10a10 10 0 0 0 10 -10`" opacity=".5" />
            </g>
            <g fill="#7fc9cf"><rect x="828" y="720" width="15" height="4" /><rect x="1180" y="634" width="15" height="4" /><rect x="1257" y="771" width="15" height="4" /></g>
            <g v-for="u in units" :key="u[1]" class="tiny mid" fill="#1d4023"><text :x="u[1]" :y="u[2]" font-weight="bold">{{ u[0] }}</text><rect :x="u[1] - 11" :y="u[2] + 3" width="22" height="7" fill="none" stroke="#6b9a6f" stroke-width=".6" /><text :x="u[1]" :y="u[2] + 8">2 BD</text><rect :x="u[1] - 7" :y="u[2] + 16" width="15" height="5" fill="#8ed2c8" /><text :x="u[1]" :y="u[2] + 15">823 SQ FT</text></g>
            <g class="tiny mid" font-weight="bold" fill="#1d4023"><text x="920" y="683">CORRIDOR</text><text x="1108" y="683">CORRIDOR</text><text x="1192" y="673">TEL/DATA</text><text x="1226" y="656" fill="#111">ELEVATOR</text><text x="1201" y="713">TRASH</text><text x="1233" y="704" fill="#111166">STAIR</text><text x="805" y="715" fill="#111166">STAIR</text></g>
            <circle cx="694" cy="737" r="7" fill="none" stroke="#5b8460" stroke-dasharray="3 1" /><text class="mid" x="694" y="740" font-size="6" fill="#33553a">A.R.S.</text>
            <path d="M934 687a3 3 0 0 1 6 0ZM937 687v3a3 3 0 0 0 3 -3Z" fill="#111" />

            <!-- structural grid -->
            <g fill="none" stroke="#888" stroke-width=".9" stroke-dasharray="14 4 3 4" opacity=".65"><path v-for="x in colLines" :key="x" :d="`M${x} ${x === 1249 ? 460 : 444}V911`" /><path v-for="y in rowLines" :key="y" :d="`M589 ${y}.5H1496`" /></g>
            <g fill="none" stroke="#999" stroke-width="1" stroke-dasharray="3 2"><path d="M752 444L750 453L760 460L663 822M1401 448L1292 908M1417 452L1415 459L1408 464L1302 908M1228 444V452L1238 459M1259 448L1249 458M1496 741L1482 756M1379 540Q1402 548 1404 572" /></g>
            <g v-for="b in topBubbles" :key="b[0]"><circle :cx="b[1]" :cy="b[2]" r="7.500" fill="#fff" stroke="#aaa" stroke-dasharray="9 1" /><text class="bub" :x="b[1]" :y="b[2] + 2">{{ b[0] }}</text></g>
            <g v-for="b in sideBubbles" :key="b[0]"><circle cx="1503" :cy="b[1]" r="7.500" fill="#fff" stroke="#aaa" stroke-dasharray="9 1" /><text class="bub" x="1503" :y="b[1] + 2">{{ b[0] }}</text></g>
            <!-- wall and window tags -->
            <g fill="#fff" stroke="#888" stroke-width=".7">
              <circle v-for="x in topTags" :key="'tt' + x" :cx="x" cy="562" r="3.500" /><rect v-for="x in topBoxes" :key="'tb' + x" :x="x - 5" y="560" width="10" height="5" />
              <circle v-for="x in bottomTags" :key="'bt' + x" :cx="x" cy="813" r="3.500" /><rect v-for="x in bottomBoxes" :key="'bb' + x" :x="x - 5" y="811" width="10" height="5" />
              <circle v-for="(p, i) in [[705, 597], [698, 625], [693, 644], [682, 687], [674, 716], [668, 737], [659, 775], [869, 578], [870, 585], [890, 585], [913, 583], [933, 571], [1377, 595], [1374, 607], [1363, 653], [1337, 687], [1336, 709], [1353, 743], [1347, 765], [1343, 786], [830, 796], [839, 796], [853, 796], [877, 798], [894, 808]]" :key="i" :cx="p[0]" :cy="p[1]" r="3.500" />
              <rect v-for="(p, i) in [[706, 589], [688, 653], [664, 744], [653, 785], [880, 577], [902, 583], [922, 577], [800, 556], [1147, 560], [1269, 555], [1387, 629], [1367, 643], [1337, 699], [1349, 752], [885, 803], [1090, 807]]" :key="'x' + i" :x="p[0] - 5" :y="p[1] - 3" width="10" height="6" />
              <path d="M706 568l6 6l-6 6l-6 -6ZM725 545l5 5l-5 5l-5 -5Z" /><rect x="849" y="542" width="8" height="7" stroke="#333" />
            </g>
            <g fill="none" stroke="#4d7a54" stroke-width=".8"><circle v-for="x in [1040, 1065, 1079]" :key="x" :cx="x" cy="795" r="3.500" /><rect x="1046" y="791" width="10" height="6" /></g>
            <g fill="#555"><rect v-for="x in topTags" :key="'q' + x" :x="x - 2" y="561" width="4" height="2" /><rect v-for="x in bottomTags" :key="'r' + x" :x="x - 2" y="812" width="4" height="2" /><rect v-for="x in topBoxes" :key="'s' + x" :x="x - 2" y="561" width="4" height="2" /><rect v-for="x in bottomBoxes" :key="'u' + x" :x="x - 3" y="812" width="6" height="2" /></g>
            <g stroke="#444" fill="none"><path d="M995 542H1004M995 549H1004M999.500 542V568M1306 542H1315M1306 549H1315M1310.500 542V568M727.500 806V830" /><path d="M1158 828V838M1164 828V838M1246 828V838M1252 828V838M1300 828V838M1348 790V798M1356 790V798" stroke="#aaa" /></g>
            <!-- section markers -->
            <g fill="#fff" stroke="#888"><path d="M1045 379H1059V393L1052 401L1045 393Z" /><path d="M630 634L645 638L650 645L641 650L628 647Z" stroke-dasharray="3 1" /><path d="M1489 719L1497 712L1510 716V728L1497 728Z" stroke-dasharray="3 1" /></g>
            <g fill="#b5dff5"><rect x="1045" y="383" width="14" height="6" /><rect x="630" y="639" width="13" height="6" /><rect x="1495" y="717" width="14" height="7" /></g>
            <!-- measured dimension -->
            <g fill="none" stroke="#1414f0" stroke-width="1.500"><path d="M681 858H703M681 854V863M703 854V863M686 854L681 858L686 862M698 854L703 858L698 862" /></g><text x="673" y="873" font-size="19" fill="#1414f0">6'-0"</text>
          </svg>

          <table class="legend">
            <thead><tr><th colspan="2">Legend</th></tr></thead>
            <tbody><tr v-for="t in legend" :key="t.name">
              <td><svg width="12" height="12" viewBox="0 0 12 12"><rect x=".5" y=".5" width="11" height="11" rx="1" fill="#fff" :stroke="t.color" /><path v-if="t.kind === 'area'" d="M6 2L10 5L9 10H3L2 5Z" :fill="t.color" /><path v-else-if="t.kind === 'line'" d="M6 2.500L9 5L8.500 9H4L2.500 5" fill="none" :stroke="t.color" /><g v-else><rect x="2" y="2" width="8" height="8" :fill="t.color" /><path d="M3 7.500H8" stroke="#fff" /></g></svg>{{ t.name }}</td><td>{{ t.qty }}</td>
            </tr></tbody>
          </table>

          <button class="helpchip" aria-label="Help"><svg width="14" height="14" viewBox="0 0 14 14" fill="none" stroke="#2b5f86" stroke-width="1.200"><circle cx="7" cy="7" r="6" /><path d="M5 5.500C5 3.200 9 3.200 9 5.500C9 7 7 7 7 8.500M7 9.700V11" /></svg></button>

          <div class="views">
            <button class="ib" aria-label="Layers"><svg width="26" height="26" viewBox="0 0 26 26" fill="#555"><path d="M13 0L26 6.500L13 13L0 6.500Z" /><path d="M0 13L4 11L13 15.500L22 11L26 13L13 19.500Z" /><path d="M0 19.500L4 17.500L13 22L22 17.500L26 19.500L13 26Z" /></svg></button>
            <button class="ib prev" aria-label="Previous sheet"><svg width="25" height="25" viewBox="0 0 25 25"><circle cx="12.500" cy="12.500" r="12.500" fill="#555" /><path d="M20 12.500H6M12 6L5.500 12.500L12 19" fill="none" stroke="#e4e4e4" stroke-width="3" /></svg></button>
            <button class="ib next" aria-label="Next sheet"><svg width="25" height="25" viewBox="0 0 25 25"><circle cx="12.500" cy="12.500" r="12.500" fill="#555" /><path d="M5 12.500H19M13 6L19.500 12.500L13 19" fill="none" stroke="#e4e4e4" stroke-width="3" /></svg></button>
          </div>

          <div class="toolbar">
            <button v-for="t in tools" :key="t.name" :class="{ on: t.active, off: t.off, cut: t.icon === 'cutout' }">
              <svg v-if="t.menu" class="arrow" width="6" height="10" viewBox="0 0 6 10" fill="#aaa"><path d="M6 0V10L0 5Z" /></svg>
              <svg width="20" height="18" viewBox="0 0 20 18" fill="currentColor">
                <g v-if="t.icon === 'overlay'"><path d="M2 8L10 4.500L11 7H14V9L10 11Z M2 11L10 14L18 11V12.500L10 16L2 12.500Z M2 8.500L10 11.500L18 8.500V10L10 13L2 10Z" /><path d="M14.500 0V8M10.500 4H18.500" stroke="currentColor" stroke-width="2.200" /></g>
                <path v-else-if="t.icon === 'edit'" d="M1 1L18 8L11 10.500L8.500 17.500Z" />
                <g v-else-if="t.icon === 'annotation'"><path d="M10 3H16V9L14 7L11.500 9.500L9.500 7.500L12 5ZM4 9L6 11L8.500 8.500L10.500 10.500L8 13L10 15H4Z" /></g>
                <g v-else-if="t.icon === 'takeoff'" fill="#606060" stroke="currentColor" stroke-width="1.500"><path d="M10 2L17.500 7.500L15 15.500H5L2.500 7.500Z" /><g fill="currentColor" stroke="none"><circle cx="10" cy="2" r="1.500" /><circle cx="17.500" cy="7.500" r="1.500" /><circle cx="15" cy="15.500" r="1.500" /><circle cx="5" cy="15.500" r="1.500" /><circle cx="2.500" cy="7.500" r="1.500" /></g></g>
                <g v-else-if="t.icon === 'cutout'"><path d="M12 1L19 6L17 13H11L7 5Z" fill="#555" stroke="currentColor" stroke-width="1.500" /><circle cx="8" cy="12" r="5.500" /><path d="M0 9L9 6L15 10L2 14Z" /><path d="M4 13H12" stroke="#393939" /></g>
                <path v-else-if="t.icon === 'star'" d="M10 .5L12.800 6L18.800 6.800L14.500 11L15.500 17L10 14.200L4.500 17L5.500 11L1.200 6.800L7.200 6Z" />
                <g v-else-if="t.icon === 'zoom'" fill="none" stroke="currentColor"><circle cx="8.500" cy="7.500" r="6" stroke-width="2.500" /><path d="M13 12L18 17" stroke-width="3.500" /><path d="M8.500 4.500V10.500M5.500 7.500H11.500" stroke-width="1.800" /></g>
                <g v-else-if="t.icon === 'print'"><path d="M4 1H14L16 3V7H4ZM3 7H17L18.500 8.500V14H16V11H4V14H1.500V8.500ZM4 11H16V17H4Z" /><path d="M6 3H12.500V6H6ZM6.500 12H13.500V14.500H6.500Z" fill="#393939" /></g>
                <g v-else><path d="M8.500 6L10.500 10L14.500 12L10.500 14L8.500 18L6.500 14L2.500 12L6.500 10Z" fill="none" stroke="currentColor" stroke-width="1.700" /><path d="M12 1L13 3.500L15.500 4.500L13 5.500L12 8L11 5.500L8.500 4.500L11 3.500ZM16 6.500L16.800 8.200L18.500 9L16.800 9.800L16 11.500L15.200 9.800L13.500 9L15.200 8.200Z" /></g>
              </svg>
              <span>{{ t.name }}</span>
            </button>
          </div>

          <div class="scale">
            <button class="chip"><svg width="10" height="8" viewBox="0 0 10 8" fill="none" stroke="#222" stroke-width="1.300"><path d="M.5 4L3.500 7L9.500 1" /></svg>1/8" = 1'</button>
            <button class="primary big"><svg width="12" height="12" viewBox="0 0 12 12" stroke="#fff" stroke-width="2.600"><path d="M6 0V12M0 6H12" /></svg>New Scale</button>
            <button class="chat" aria-label="Open chat"><svg width="18" height="16" viewBox="0 0 18 16" fill="#fff"><path d="M9 0C14 0 17 3 17 7.500V16L12.500 14.300C5 16.500 1 12.500 1 7.500C1 3 4 0 9 0Z" /></svg></button>
          </div>
        </div>
      </main>
    </div>
  </div>
</template>

<style>
body { margin: 0; background: #fff; }
</style>

<style scoped>
* { box-sizing: border-box; }
.app { font: 13px/18px Lato, "Liberation Sans", sans-serif; color: #3a3a3a; height: 100vh; display: flex; flex-direction: column; padding-left: 5px; border-top: 1px solid #dfe5e2; background: #fff; overflow: hidden; }
button, input, select { font: inherit; color: inherit; border: 0; background: none; padding: 0; margin: 0; }
a { color: inherit; text-decoration: none; }
svg { display: block; flex: none; }
.ib { display: inline-flex; align-items: center; justify-content: center; }
.topbar { height: 38px; flex: none; background: #393939; color: #fff; display: flex; align-items: center; padding: 0 5px 0 6px; }
.brand { display: flex; align-items: center; gap: 5px; width: 84px; }
.brand span { font: bold 15px/20px Roboto, sans-serif; }
.expand { width: 14px; margin-right: 13px; }
.popout { width: 16px; margin-right: 14px; }
.menu { display: flex; align-items: center; gap: 4px; font-weight: bold; font-size: 14px; white-space: nowrap; }
.projects { width: 100px; } .calendar { width: 103px; }
.actions { margin-left: auto; display: flex; align-items: center; gap: 11px; }
.account { margin-left: 6px; }
.subnav { height: 33px; flex: none; display: flex; border-bottom: 1px solid #ddd; padding: 0 7px 0 283px; font: 12px/18px Roboto, sans-serif; }
.subnav a { padding: 0 8px; line-height: 29px; border-bottom: 2px solid transparent; }
.subnav a:last-child { padding-right: 0; }
.subnav .on { border-color: #00904a; }
.grow { flex: 1; }
.body { flex: 1; display: flex; min-height: 0; }
.side { width: 390px; flex: none; background: #f4f4f4; border-right: 1px solid #d8d8d8; padding: 14px 11px 0 12px; position: relative; z-index: 2; }
.sidetabs { display: flex; margin-left: -3px; }
.sidetabs button { height: 28px; padding: 0 14px; background: #dfdfdf; border-radius: 7px 7px 0 0; }
.sidetabs .on { background: #fff; }
.tools { display: flex; gap: 9px; margin-top: 13px; }
.search { flex: 1; display: flex; align-items: center; gap: 13px; height: 33px; background: #fff; border: 1px solid #bbb; border-radius: 4px; padding-left: 14px; }
.search input { width: 170px; outline: 0; }
.search input::placeholder { color: #8a8a8a; opacity: 1; }
.primary { display: flex; align-items: center; justify-content: center; gap: 8px; width: 120px; height: 33px; background: #00904a; color: #fff; font-weight: 900; border-radius: 4px; box-shadow: 0 2px 4px rgba(0,0,0,.15); }
.selectwrap { position: relative; display: flex; align-items: center; height: 34px; background: #fff; border: 1px solid #bbb; border-radius: 4px; }
.selectwrap select { appearance: none; width: 100%; height: 100%; padding: 0 10px; outline: 0; }
.selectwrap svg { position: absolute; right: 5px; pointer-events: none; }
.group { margin-top: 10px; color: #999; }
.takeoffs { width: 100%; border-collapse: collapse; table-layout: fixed; color: #555; }
.c-eye { width: 31px; } .c-icon { width: 30px; } .c-qty { width: 62px; } .c-go { width: 22px; } .c-more { width: 35px; }
.takeoffs th { height: 40px; padding: 4px 0 0; border-bottom: 1px solid #555; font-weight: bold; }
.takeoffs th svg { margin: auto; }
.takeoffs .l { text-align: left; }
.takeoffs .q { text-align: left; padding-left: 32px; }
.az { position: relative; font-size: 15px; }
.az span { font-weight: normal; }
.az svg { position: absolute; left: 11px; top: 13px; }
.takeoffs td { height: 30px; padding: 0; background: #fff; border-bottom: 1px solid #f0f0f0; white-space: nowrap; }
.takeoffs td:first-child { border-right: 1px solid #f0f0f0; }
.takeoffs .ic { padding-left: 3px; }
.takeoffs .qty { text-align: right; }
.takeoffs td .ib { display: flex; margin: auto; }
.takeoffs td:nth-child(5) .ib { margin-right: 0; }
.takeoffs td:last-child .ib { margin-left: 16px; }
.collapse { position: absolute; right: -10px; top: 372px; width: 24px; height: 24px; border-radius: 50%; background: #fff; box-shadow: 0 1px 4px rgba(0,0,0,.3); display: flex; align-items: center; justify-content: center; }
.main { flex: 1; min-width: 0; display: flex; flex-direction: column; }
.strip { height: 47px; flex: none; display: flex; background: #f3f3f3; border-bottom: 5px solid #fff; padding-top: 4px; }
.sheets { display: flex; width: 1103px; margin-top: 8px; height: 30px; }
.sheet { flex: 1; min-width: 0; display: flex; align-items: center; gap: 6px; padding-left: 9px; background: #d3d3d3; position: relative; white-space: nowrap; }
.sheet + .sheet::before { content: ""; position: absolute; left: 0; top: 6px; width: 2px; height: 19px; background: #333; }
.sheet a { width: 109px; }
.sheet.first { gap: 17px; padding-left: 11px; }
.sheet.on { background: #fff; }
.pick { margin-left: auto; height: 34px; border-left: 1px solid #ccc; padding: 0 5px 0 15px; color: #555; }
.pick .selectwrap { width: 158px; }
.pick select { font: 13px/18px Roboto, sans-serif; padding-right: 8px; }
.canvas { flex: 1; min-height: 0; position: relative; overflow: hidden; background-color: #dedede; background-image: repeating-linear-gradient(0deg, rgba(255,255,255,.22) 0 1px, transparent 1px 3px), repeating-linear-gradient(90deg, rgba(0,0,0,.015) 0 1px, transparent 1px 4px); }
.plan { position: absolute; inset: 0; width: 100%; height: 100%; font-family: "Liberation Sans", sans-serif; }
.paper { filter: drop-shadow(5px 4px 6px rgba(0,0,0,.28)); }
.tiny { font-size: 4px; }
.note { font-size: 5px; }
.mid { text-anchor: middle; }
.dim { font-size: 5px; fill: #8cc2f3; text-anchor: middle; font-style: italic; }
.bub { font-size: 5px; font-weight: bold; text-anchor: middle; fill: #222; }
.urb { font: 900 10px "DejaVu Sans", sans-serif; }
.des { font: bold 5px "DejaVu Sans", sans-serif; }
.della { font-family: Roboto, sans-serif; font-weight: 900; text-anchor: middle; }
.nuba { font: bold 8px "Open Sans", sans-serif; text-anchor: middle; fill: #333; }
.legend { position: absolute; left: 89px; top: 29px; width: 251px; border-collapse: collapse; border: 1px solid #3aa873; background: #fff; font: 11px/14px "Liberation Sans", sans-serif; color: #333; }
.legend th { text-align: left; font-weight: normal; background: #e6f4e8; padding: 0 0 1px 2px; height: 16px; border-bottom: 1px solid #a8cdb6; }
.legend td { height: 16px; padding: 0 2px; border-bottom: 1px solid #bbb; white-space: nowrap; }
.legend td:last-child { width: 78px; border-left: 1px solid #ccc; }
.legend td svg { display: inline-block; vertical-align: -2px; margin-right: 3px; }
.helpchip { position: absolute; left: 9px; bottom: 8px; width: 30px; height: 28px; background: #c3e6f8; display: flex; align-items: center; justify-content: center; border-radius: 2px; }
.views { position: absolute; right: 1px; top: 9px; display: flex; align-items: center; }
.prev { margin-left: 33px; } .next { margin-left: 4px; }
.toolbar { position: absolute; right: 0; top: 70px; width: 64px; display: flex; flex-direction: column; background: #393939; border-radius: 8px 0 0 8px; overflow: hidden; }
.toolbar button { position: relative; height: 45px; display: flex; flex-direction: column; align-items: center; justify-content: center; gap: 2px; padding: 0 0 0 4px; color: #fff; font: bold 11px/18px Lato, sans-serif; }
.toolbar .on { background: #00904a; border-radius: 8px 0 0 8px; }
.toolbar .off { color: #868686; }
.toolbar .cut { height: 50px; }
.toolbar .arrow { position: absolute; left: 5px; top: 12px; }
.scale { position: absolute; right: 16px; bottom: 3px; display: flex; align-items: flex-end; }
.chip { display: flex; align-items: center; justify-content: center; gap: 6px; width: 74px; height: 23px; margin-bottom: 4px; background: #d5f5e3; border: 1px solid #6fce98; border-radius: 3px; font-size: 12px; }
.big { width: 99px; height: 34px; margin: 0 31px 4px 8px; gap: 4px; }
.chat { width: 45px; height: 45px; border-radius: 50%; background: #008046; display: flex; align-items: center; justify-content: center; box-shadow: 0 1px 4px rgba(0,0,0,.3); }
</style>
